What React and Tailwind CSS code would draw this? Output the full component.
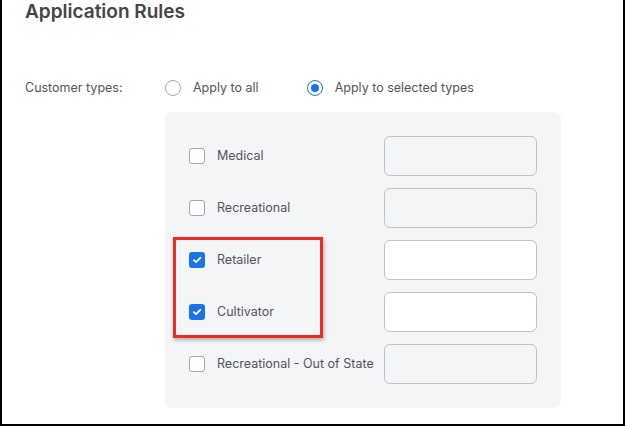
import React from "react";

const rows = [
  { label: "Medical", checked: false },
  { label: "Recreational", checked: false },
  { label: "Retailer", checked: true },
  { label: "Cultivator", checked: true },
  { label: "Recreational - Out of State", checked: false },
];

function Checkbox({ checked }) {
  if (checked) {
    return (
      <span className="flex h-4 w-4 items-center justify-center rounded-[3px] bg-[#1a73e8]">
        <svg width="10" height="10" viewBox="0 0 10 10" fill="none">
          <path d="M1.8 5.2 L4 7.2 L8.3 2.8" stroke="white" strokeWidth="1.8" strokeLinecap="round" strokeLinejoin="round" />
        </svg>
      </span>
    );
  }
  return <span className="block h-4 w-4 rounded-[3px] border border-[#a3a8ae] bg-white" />;
}

function Radio({ selected }) {
  if (selected) {
    return (
      <span className="flex h-4 w-4 items-center justify-center rounded-full border-[1.5px] border-[#1a73e8] bg-white">
        <span className="block h-2 w-2 rounded-full bg-[#1a73e8]" />
      </span>
    );
  }
  return <span className="block h-4 w-4 rounded-full border border-[#a3a8ae] bg-white" />;
}

export default function App() {
  return (
    <div
      className="box-border h-[426px] w-[625px] border-x-2 border-b-2 border-black bg-white pl-[23px] text-[#51565c]"
      style={{ fontFamily: "Inter, 'Noto Sans', sans-serif" }}
    >
      <h1 className="text-[19px] font-semibold leading-[24px] text-[#41464c]">Application Rules</h1>
      <div className="mt-[56px] flex h-4 items-center text-[12.5px]">
        <span className="w-[140px]">Customer types:</span>
        <div className="flex items-center gap-3">
          <Radio selected={false} />
          <span>Apply to all</span>
        </div>
        <div className="ml-[48px] flex items-center gap-3">
          <Radio selected={true} />
          <span>Apply to selected types</span>
        </div>
      </div>
      <div className="relative ml-[140px] mt-[16px] flex w-[396px] flex-col gap-3 rounded-lg bg-[#f4f5f7] p-6">
        {rows.map((r) => (
          <div key={r.label} className="flex h-10 items-center justify-between">
            <div className="flex items-center gap-3 text-[12.5px]">
              <Checkbox checked={r.checked} />
              <span>{r.label}</span>
            </div>
            <div
              className={`h-10 w-[153px] rounded-md border border-[#bfc2c6] ${
                r.checked ? "bg-white" : "bg-[#f4f5f7]"
              }`}
            />
          </div>
        ))}
        <div className="absolute left-[8px] top-[125px] h-[101px] w-[150px] border-[3px] border-[#ee2a24] shadow-[1px_2px_4px_rgba(0,0,0,0.3)]" />
      </div>
    </div>
  );
}
